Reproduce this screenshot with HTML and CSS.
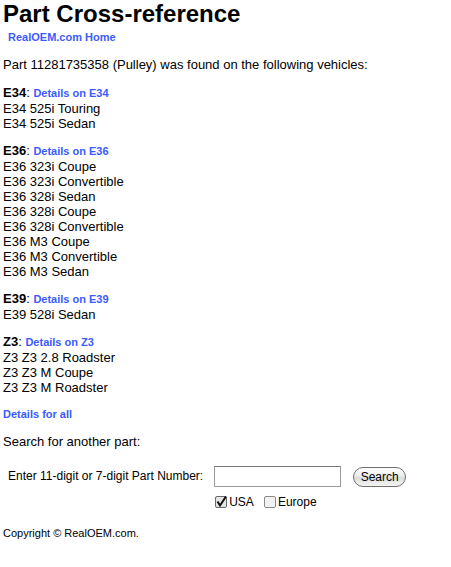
FILE: index.html
```html
<!DOCTYPE html>
<html>
<head>
<meta charset="utf-8">
<title>Part Cross-reference</title>
<link rel="stylesheet" href="styles.css">
</head>
<body>
<h1 class="title">Part Cross-reference</h1>
<div class="home"><a href="#">RealOEM.com Home</a></div>
<p class="intro">Part 11281735358 (Pulley) was found on the following vehicles:</p>

<p class="group first"><b>E34</b>: <a href="#">Details on E34</a><br>
E34 525i Touring<br>
E34 525i Sedan</p>

<p class="group"><b>E36</b>: <a href="#">Details on E36</a><br>
E36 323i Coupe<br>
E36 323i Convertible<br>
E36 328i Sedan<br>
E36 328i Coupe<br>
E36 328i Convertible<br>
E36 M3 Coupe<br>
E36 M3 Convertible<br>
E36 M3 Sedan</p>

<p class="group"><b>E39</b>: <a href="#">Details on E39</a><br>
E39 528i Sedan</p>

<p class="group"><b>Z3</b>: <a href="#">Details on Z3</a><br>
Z3 Z3 2.8 Roadster<br>
Z3 Z3 M Coupe<br>
Z3 Z3 M Roadster</p>

<p class="group all"><a href="#">Details for all</a></p>

<p class="group">Search for another part:</p>

<form class="search">
  <label class="lbl" for="pn">Enter 11-digit or 7-digit Part Number:</label>
  <input class="pn" id="pn" type="text">
  <span class="btn">Search</span>
  <div class="regions">
    <span class="cb checked"><svg width="12" height="12" viewBox="0 0 12 12"><rect x="0.5" y="0.5" width="11" height="11" rx="1.5" fill="#e4e4e4" stroke="#6a6a6a"/><path d="M2.5 5.5 L5 9.5 L11 0.5" fill="none" stroke="#111" stroke-width="2"/></svg></span>
    <span class="cbl">USA</span>
    <span class="cb"><svg width="12" height="12" viewBox="0 0 12 12"><rect x="0.5" y="0.5" width="11" height="11" rx="1.5" fill="#f2f2f2" stroke="#8a8a8a"/></svg></span>
    <span class="cbl">Europe</span>
  </div>
</form>

<p class="copy">Copyright © RealOEM.com.</p>
</body>
</html>
```
FILE: styles.css
```css
body {
  margin: 0;
  padding: 0 3px;
  font-family: "Liberation Sans", Arial, sans-serif;
  font-size: 13px;
  line-height: 15px;
  color: #000;
  background: #fff;
}
a {
  color: #3a5cff;
  font-weight: bold;
  font-size: 11px;
  text-decoration: none;
}
.title {
  margin: 0;
  font-size: 24px;
  line-height: 28px;
  font-weight: bold;
}
.home {
  padding-left: 5px;
  margin-top: 2px;
  line-height: 14px;
}
.intro {
  margin: 13px 0 0;
}
.group {
  margin: 12px 0 0;
}
.group.first {
  margin-top: 13px;
}
.group.all {
  margin-top: 11px;
}
.search {
  display: grid;
  grid-template-columns: auto 127px auto;
  justify-content: start;
  align-items: center;
  column-gap: 11px;
  row-gap: 8px;
  margin: 17px 0 0 5px;
  font-size: 12px;
}
.pn {
  width: 127px;
  height: 21px;
  box-sizing: border-box;
  margin: 0;
  border: 1px solid #9a9a9a;
  border-top-color: #7a7a7a;
  background: #fff;
}
.btn {
  margin-left: 1px;
  width: 53px;
  height: 20px;
  box-sizing: border-box;
  border: 1px solid #6f6f6f;
  border-radius: 10px;
  background: linear-gradient(#ffffff, #e8e8e8 50%, #dcdcdc 51%, #f4f4f4);
  font-size: 12px;
  line-height: 18px;
  text-align: center;
}
.regions {
  grid-column: 2 / 4;
  display: flex;
  align-items: center;
  font-size: 12px;
  line-height: 14px;
  margin-left: 1px;
}
.cb {
  display: flex;
  width: 12px;
  height: 12px;
}
.cbl {
  margin-left: 2px;
  margin-right: 10px;
}
.copy {
  margin: 17px 0 0;
  font-size: 11px;
}
```
